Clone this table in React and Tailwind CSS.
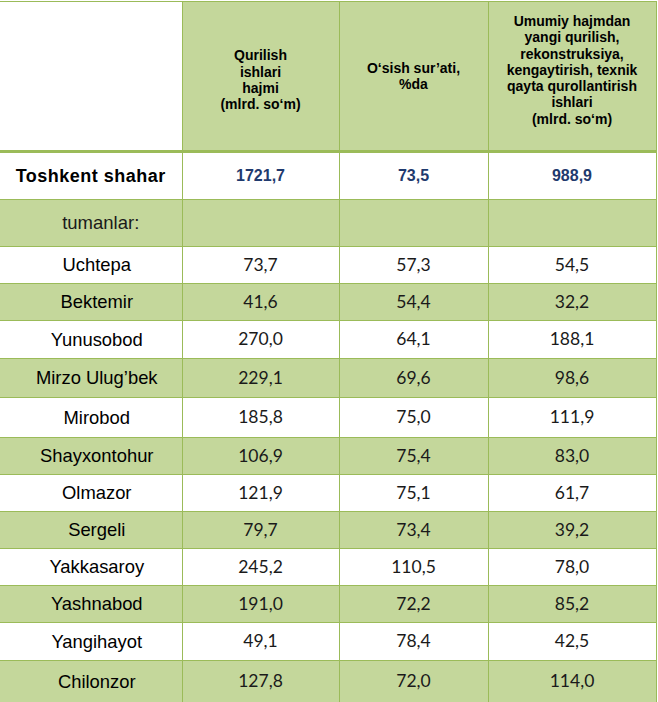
const rows = [
    ['Uchtepa', '73,7', '57,3', '54,5', 'h-[37px]'],
    ['Bektemir', '41,6', '54,4', '32,2', 'h-[37px]'],
    ['Yunusobod', '270,0', '64,1', '188,1', 'h-[38px]'],
    ['Mirzo Ulug’bek', '229,1', '69,6', '98,6', 'h-[39px]'],
    ['Mirobod', '185,8', '75,0', '111,9', 'h-[40px]'],
    ['Shayxontohur', '106,9', '75,4', '83,0', 'h-[37px]'],
    ['Olmazor', '121,9', '75,1', '61,7', 'h-[37px]'],
    ['Sergeli', '79,7', '73,4', '39,2', 'h-[37px]'],
    ['Yakkasaroy', '245,2', '110,5', '78,0', 'h-[37px]'],
    ['Yashnabod', '191,0', '72,2', '85,2', 'h-[37px]'],
    ['Yangihayot', '49,1', '78,4', '42,5', 'h-[38px]'],
    ['Chilonzor', '127,8', '72,0', '114,0', 'h-[42px]'],
];

export default function App() {
    const cell = 'border border-[#9bbb59] text-center align-middle';
    const head = `${cell} bg-[#c4d79b] font-bold text-[14px] leading-[16.3px] text-black`;
    const num = `${cell} text-[17.5px] text-[#1a1a1a] font-['Lato',sans-serif]`;
    const total = `${cell} text-[16px] font-bold text-[#1f3a6e]`;

    return (
        <div className="w-[658px] h-[702px] overflow-hidden bg-white pt-px font-['Liberation_Sans',Arial,sans-serif]">
            <table className="table-fixed border-collapse w-[656px]">
                <colgroup>
                    <col className="w-[182px]" />
                    <col className="w-[157px]" />
                    <col className="w-[149px]" />
                    <col className="w-[168px]" />
                </colgroup>
                <thead>
                    <tr className="h-[150px]">
                        <th className="border-t border-r border-[#9bbb59] bg-white"></th>
                        <th className={`${head} pt-2`}>
                            Qurilish<br />ishlari<br />hajmi<br />(mlrd. so‘m)
                        </th>
                        <th className={head}>
                            O‘sish sur’ati,<br />%da
                        </th>
                        <th className={`${head} pb-3`}>
                            Umumiy hajmdan<br />yangi qurilish,<br />rekonstruksiya,<br />kengaytirish, texnik<br />qayta qurollantirish<br />ishlari<br />(mlrd. so‘m)
                        </th>
                    </tr>
                </thead>
                <tbody>
                    <tr className="h-[48px] border-t-[3px] border-[#9bbb59]">
                        <td className="border-r border-b border-[#9bbb59] text-center align-middle text-[18px] font-bold tracking-[0.5px] text-black">
                            Toshkent shahar
                        </td>
                        <td className={total}>1721,7</td>
                        <td className={total}>73,5</td>
                        <td className={total}>988,9</td>
                    </tr>
                    <tr className="h-[47px] bg-[#c4d79b]">
                        <td className="border-r border-b border-[#9bbb59] text-center align-middle pl-5 text-[18.5px] text-[#1a1a1a]">
                            tumanlar:
                        </td>
                        <td className={cell}></td>
                        <td className={cell}></td>
                        <td className={cell}></td>
                    </tr>
                    {rows.map(([name, a, b, c, h], i) => (
                        <tr key={name} className={`${h} ${i % 2 === 1 ? 'bg-[#c4d79b]' : 'bg-white'}`}>
                            <td className="border-r border-b border-[#9bbb59] text-center align-middle pl-3 text-[18.4px] text-black">
                                {name}
                            </td>
                            <td className={num}>{a}</td>
                            <td className={num}>{b}</td>
                            <td className={num}>{c}</td>
                        </tr>
                    ))}
                </tbody>
            </table>
        </div>
    );
}
